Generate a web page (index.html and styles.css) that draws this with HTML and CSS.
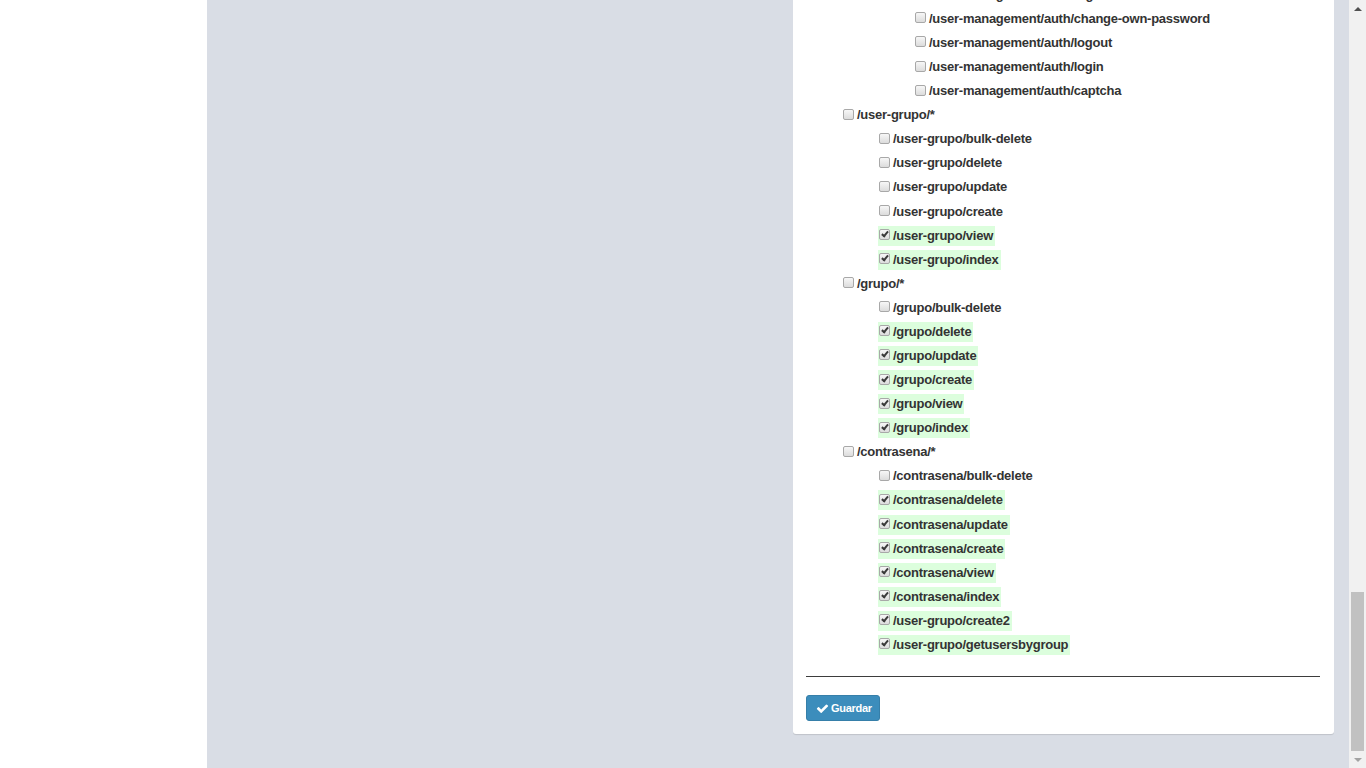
FILE: index.html
```html
<!DOCTYPE html>
<html lang="es">
<head>
<meta charset="utf-8">
<title>Permisos</title>
<link rel="stylesheet" href="styles.css">
</head>
<body>
<div class="app">
  <aside class="sidebar"></aside>
  <main class="content">
    <div class="col"></div>
    <div class="col col-right">
      <div class="box">
        <div class="routes">
          <div class="row l3"><label class="item"><input type="checkbox"><span>/user-management/auth/registration</span></label></div>
          <div class="row l3"><label class="item"><input type="checkbox"><span>/user-management/auth/change-own-password</span></label></div>
          <div class="row l3"><label class="item"><input type="checkbox"><span>/user-management/auth/logout</span></label></div>
          <div class="row l3"><label class="item"><input type="checkbox"><span>/user-management/auth/login</span></label></div>
          <div class="row l3"><label class="item"><input type="checkbox"><span>/user-management/auth/captcha</span></label></div>
          <div class="row l1"><label class="item"><input type="checkbox"><span>/user-grupo/*</span></label></div>
          <div class="row l2"><label class="item"><input type="checkbox"><span>/user-grupo/bulk-delete</span></label></div>
          <div class="row l2"><label class="item"><input type="checkbox"><span>/user-grupo/delete</span></label></div>
          <div class="row l2"><label class="item"><input type="checkbox"><span>/user-grupo/update</span></label></div>
          <div class="row l2"><label class="item"><input type="checkbox"><span>/user-grupo/create</span></label></div>
          <div class="row l2"><label class="item on"><input type="checkbox" checked><span>/user-grupo/view</span></label></div>
          <div class="row l2"><label class="item on"><input type="checkbox" checked><span>/user-grupo/index</span></label></div>
          <div class="row l1"><label class="item"><input type="checkbox"><span>/grupo/*</span></label></div>
          <div class="row l2"><label class="item"><input type="checkbox"><span>/grupo/bulk-delete</span></label></div>
          <div class="row l2"><label class="item on"><input type="checkbox" checked><span>/grupo/delete</span></label></div>
          <div class="row l2"><label class="item on"><input type="checkbox" checked><span>/grupo/update</span></label></div>
          <div class="row l2"><label class="item on"><input type="checkbox" checked><span>/grupo/create</span></label></div>
          <div class="row l2"><label class="item on"><input type="checkbox" checked><span>/grupo/view</span></label></div>
          <div class="row l2"><label class="item on"><input type="checkbox" checked><span>/grupo/index</span></label></div>
          <div class="row l1"><label class="item"><input type="checkbox"><span>/contrasena/*</span></label></div>
          <div class="row l2"><label class="item"><input type="checkbox"><span>/contrasena/bulk-delete</span></label></div>
          <div class="row l2"><label class="item on"><input type="checkbox" checked><span>/contrasena/delete</span></label></div>
          <div class="row l2"><label class="item on"><input type="checkbox" checked><span>/contrasena/update</span></label></div>
          <div class="row l2"><label class="item on"><input type="checkbox" checked><span>/contrasena/create</span></label></div>
          <div class="row l2"><label class="item on"><input type="checkbox" checked><span>/contrasena/view</span></label></div>
          <div class="row l2"><label class="item on"><input type="checkbox" checked><span>/contrasena/index</span></label></div>
          <div class="row l2"><label class="item on"><input type="checkbox" checked><span>/user-grupo/create2</span></label></div>
          <div class="row l2"><label class="item on"><input type="checkbox" checked><span>/user-grupo/getusersbygroup</span></label></div>
        </div>
        <div class="rule"></div>
        <button class="btn" type="submit">
          <svg class="ico" viewBox="0 0 1792 1792" aria-hidden="true"><path d="M1671 566q0 40-28 68l-724 724-136 136q-28 28-68 28t-68-28l-136-136-362-362q-28-28-28-68t28-68l136-136q28-28 68-28t68 28l294 295 656-657q28-28 68-28t68 28l136 136q28 28 28 68z"/></svg>
          <span>Guardar</span>
        </button>
      </div>
    </div>
  </main>
  <div class="scrollbar">
    <div class="sb-btn"><span class="tri up"></span></div>
    <div class="sb-track"><div class="sb-thumb"></div></div>
    <div class="sb-btn"><span class="tri down"></span></div>
  </div>
</div>
</body>
</html>
```

FILE: styles.css
```css
html, body {
  margin: 0;
  padding: 0;
  height: 768px;
  overflow: hidden;
}

body {
  font-family: "Liberation Sans", Arial, sans-serif;
  color: #333;
  background: #fff;
}

.app {
  display: flex;
  height: 768px;
}

.sidebar {
  width: 207px;
  flex: none;
  background: #fff;
}

.content {
  flex: 1;
  background: #d9dde5;
  display: grid;
  grid-template-columns: 1fr 1fr;
  column-gap: 30px;
  padding: 0 15px;
  overflow: hidden;
}

.col {
  display: flex;
  flex-direction: column;
  justify-content: flex-end;
  padding-bottom: 34px;
  min-height: 0;
  overflow: hidden;
}

.box {
  background: #fff;
  border-radius: 0 0 3px 3px;
  box-shadow: 0 1px 1px rgba(0, 0, 0, 0.12);
  padding: 0 14px 13px 13px;
  flex: none;
}

.routes {
  display: flex;
  flex-direction: column;
}

.row {
  height: 24.08px;
  display: flex;
  align-items: flex-start;
}

.l1 { padding-left: 36px; }
.l2 { padding-left: 72px; }
.l3 { padding-left: 108px; }

.item {
  display: inline-flex;
  align-items: center;
  height: 20px;
  padding: 0 2px 0 1px;
  font-size: 13px;
  font-weight: bold;
  letter-spacing: -0.25px;
  line-height: 20px;
  white-space: nowrap;
}

.item.on {
  background: #dcfedd;
}

.item input {
  -webkit-appearance: none;
  appearance: none;
  width: 11px;
  height: 11px;
  margin: 0 3px 2px 0;
  border: 1px solid #a8a8a8;
  border-radius: 2px;
  background: linear-gradient(#f7f7f7, #dcdcdc);
  position: relative;
  flex: none;
}

.item input:checked::after {
  content: "";
  position: absolute;
  left: 3px;
  top: 0;
  width: 2px;
  height: 5px;
  border: solid #3a3a3a;
  border-width: 0 2px 2px 0;
  transform: rotate(40deg);
}

.rule {
  border-top: 1px solid #3d3d3d;
  margin: 17px 0 18px;
}

.btn {
  display: inline-flex;
  align-items: center;
  gap: 2px;
  height: 26px;
  padding: 0 7px 0 9px;
  background: #3c8dbc;
  border: 1px solid #367fa9;
  border-radius: 3px;
  color: #fff;
  font-family: "Liberation Sans", Arial, sans-serif;
  font-size: 11px;
  font-weight: bold;
  letter-spacing: -0.3px;
  cursor: pointer;
}

.ico {
  width: 13px;
  height: 13px;
  fill: #fff;
}

.scrollbar {
  width: 17px;
  flex: none;
  background: #f1f1f1;
  display: flex;
  flex-direction: column;
}

.sb-btn {
  height: 17px;
  display: flex;
  align-items: center;
  justify-content: center;
}

.tri {
  width: 0;
  height: 0;
  border-left: 4px solid transparent;
  border-right: 4px solid transparent;
}

.tri.up { border-bottom: 4px solid #505050; }
.tri.down { border-top: 4px solid #a3a3a3; }

.sb-track {
  flex: 1;
  display: flex;
  flex-direction: column;
  justify-content: flex-end;
  align-items: center;
}

.sb-thumb {
  width: 13px;
  height: 159px;
  background: #c1c1c1;
}
```
